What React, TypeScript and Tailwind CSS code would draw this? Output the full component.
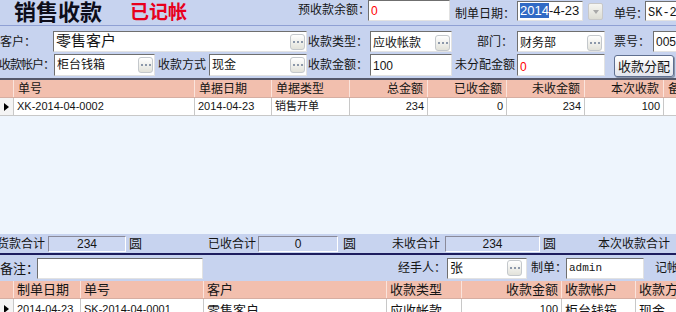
import React from 'react';

const Dots: React.FC = () => (
  <span className="flex h-[16px] w-[15px] shrink-0 items-center justify-center gap-[2px] rounded-[3px] border border-[#c4c8cc] bg-linear-to-b from-white to-[#e2e2da]">
    <i className="h-[2px] w-[2px] bg-[#8c98aa]" />
    <i className="h-[2px] w-[2px] bg-[#8c98aa]" />
    <i className="h-[2px] w-[2px] bg-[#8c98aa]" />
  </span>
);

type BoxProps = { className: string; dots?: boolean; children?: React.ReactNode };

const Box: React.FC<BoxProps> = ({ className, dots, children }) => (
  <div
    className={`flex shrink-0 items-center border border-t-[#6f6f6f] border-l-[#6f6f6f] border-r-[#e2e2e2] border-b-[#e2e2e2] bg-white pl-[2px] pr-[1px] ${className}`}
  >
    <div className="flex-1 overflow-hidden whitespace-nowrap">{children}</div>
    {dots && <Dots />}
  </div>
);

const Label: React.FC<{ className: string; children: React.ReactNode }> = ({ className, children }) => (
  <div className={`flex shrink-0 items-center whitespace-nowrap leading-none ${className}`}>{children}</div>
);

const Arrow: React.FC = () => (
  <span className="h-0 w-0 border-y-[4px] border-l-[5px] border-y-transparent border-l-black" />
);

const topCols = [
  { w: 'w-[181px]', t: '单号', v: 'XK-2014-04-0002', r: false },
  { w: 'w-[77px]', t: '单据日期', v: '2014-04-23', r: false },
  { w: 'w-[78px]', t: '单据类型', v: '销售开单', r: false },
  { w: 'w-[78px]', t: '总金额', v: '234', r: true },
  { w: 'w-[79px]', t: '已收金额', v: '0', r: true },
  { w: 'w-[78px]', t: '未收金额', v: '234', r: true },
  { w: 'w-[79px]', t: '本次收款', v: '100', r: true },
  { w: 'w-[40px]', t: '备', v: '', r: false },
];

const bottomCols = [
  { w: 'w-[67px]', t: '制单日期', v: '2014-04-23', r: false },
  { w: 'w-[123px]', t: '单号', v: 'SK-2014-04-0001', r: false },
  { w: 'w-[183px]', t: '客户', v: '零售客户', r: false },
  { w: 'w-[75px]', t: '收款类型', v: '应收帐款', r: false },
  { w: 'w-[100px]', t: '收款金额', v: '100', r: true },
  { w: 'w-[74px]', t: '收款帐户', v: '柜台钱箱', r: false },
  { w: 'w-[60px]', t: '收款方', v: '现金', r: false },
];

const Sum: React.FC<{ className: string; children: React.ReactNode }> = ({ className, children }) => (
  <div
    className={`flex h-[16px] shrink-0 items-center justify-center border border-t-[#8a8a9a] border-l-[#8a8a9a] border-r-white border-b-white bg-[#cdd8f2] text-[12px] ${className}`}
  >
    {children}
  </div>
);

export default function App() {
  return (
    <div className="flex h-[312px] w-[676px] flex-col overflow-hidden bg-[#c7d3ef] font-['Liberation_Sans','Noto_Sans_CJK_SC',sans-serif] text-[12px] text-[#151515]">
      {/* title row */}
      <div className="flex h-[26px] shrink-0 items-start border-b border-[#8fa0d4]">
        <div className="ml-[14px] mt-[1px] w-[116px] shrink-0 text-[22px] font-bold leading-[24px] text-[#0d0d1a]">销售收款</div>
        <div className="mt-[3px] w-[168px] shrink-0 text-[19px] font-bold leading-[20px] text-[#e8001c]">已记帐</div>
        <Label className="mt-[4px] w-[70px]">预收款余额：</Label>
        <Box className="h-[21px] w-[82px] items-start pt-[1px] text-[#ff0000]">0</Box>
        <Label className="ml-[5px] mt-[8px] w-[62px]">制单日期：</Label>
        <Box className="mt-[1px] h-[20px] w-[66px] text-[13px]">
          <span className="bg-[#316ac5] text-white">2014</span>-4-23
        </Box>
        <div className="ml-[5px] mt-[3px] flex h-[17px] w-[15px] shrink-0 items-center justify-center rounded-[2px] border border-[#c8c8c8] bg-linear-to-b from-[#f6f6f2] to-[#dcdcd4]">
          <span className="h-0 w-0 border-x-[3px] border-t-[4px] border-x-transparent border-t-[#a8a8a8]" />
        </div>
        <Label className="ml-[11px] mt-[8px] w-[31px] tracking-[-1px]">单号：</Label>
        <Box className="mt-[1px] h-[20px] flex-1 items-start pt-[2px] font-['Liberation_Mono',monospace] text-[12px]">SK-2014-04-0001</Box>
      </div>

      {/* row 1 */}
      <div className="mt-[5px] flex h-[21px] shrink-0 items-stretch">
        <Label className="w-[53px]">客户：</Label>
        <Box className="w-[254px] text-[15px]" dots>零售客户</Box>
        <Label className="w-[63px] justify-end pr-[2px]">收款类型：</Label>
        <Box className="w-[82px] pt-[2px]" dots>应收帐款</Box>
        <Label className="w-[65px] justify-end pr-[4px]">部门：</Label>
        <Box className="w-[88px] pr-[2px] pt-[2px]" dots>财务部</Box>
        <Label className="w-[48px] pl-[9px]">票号：</Label>
        <Box className="flex-1 items-start pt-[1px]">005</Box>
      </div>

      {/* row 2 */}
      <div className="mt-[2px] flex h-[22px] shrink-0 items-stretch">
        <Label className="w-[54px] justify-end tracking-[-1px]">收款帐户：</Label>
        <Box className="w-[101px]" dots>柜台钱箱</Box>
        <Label className="w-[54px] pl-[3px]">收款方式</Label>
        <Box className="w-[98px]" dots>现金</Box>
        <Label className="w-[63px] justify-end pr-[2px]">收款金额：</Label>
        <Box className="w-[82px] items-start pt-[2px]">100</Box>
        <Label className="w-[65px] pl-[3px]">未分配金额</Label>
        <Box className="w-[88px] items-start pt-[3px] text-[#ff0000]">0</Box>
        <button className="ml-[9px] mt-[1px] h-[22px] w-[60px] shrink-0 rounded-[3px] border border-[#5f6f90] bg-linear-to-b from-white to-[#e2e4ec] text-[13px] leading-none text-[#151515] shadow-[1px_1px_0_#8a94a8]">
          收款分配
        </button>
      </div>

      <div className="mt-[2px] h-[2px] shrink-0 bg-[#55586a]" />

      {/* top grid */}
      <div className="flex h-[18px] shrink-0 border-b border-[#d6aea2] bg-[#f2bfae]">
        <div className="w-[14px] shrink-0 border-r border-[#fbe4dc]" />
        {topCols.map((c) => (
          <div
            key={c.t}
            className={`flex shrink-0 items-center whitespace-nowrap border-r border-[#fbe4dc] px-[4px] leading-none ${c.w} ${c.r ? 'justify-end' : ''}`}
          >
            {c.t}
          </div>
        ))}
      </div>
      <div className="flex h-[18px] shrink-0 border-b border-[#c8c8c8] bg-white text-[11px]">
        <div className="flex w-[14px] shrink-0 items-center justify-center border-r border-[#c8c8c8] bg-[#f4f4f4]">
          <Arrow />
        </div>
        {topCols.map((c) => (
          <div
            key={c.t}
            className={`flex shrink-0 items-center whitespace-nowrap border-r border-[#c8c8c8] px-[3px] leading-none ${c.w} ${c.r ? 'justify-end' : ''}`}
          >
            {c.v}
          </div>
        ))}
      </div>
      <div className="h-[118px] shrink-0 bg-[#eef5fd]" />

      {/* totals */}
      <div className="flex h-[19px] shrink-0 items-center">
        <Label className="w-[48px] justify-end pr-[3px]">货款合计</Label>
        <Sum className="w-[78px]">234</Sum>
        <Label className="w-[82px] pl-[3px] text-[13px]">圆</Label>
        <Label className="w-[50px]">已收合计</Label>
        <Sum className="w-[80px]">0</Sum>
        <Label className="w-[54px] pl-[5px] text-[13px]">圆</Label>
        <Label className="w-[53px]">未收合计</Label>
        <Sum className="w-[95px]">234</Sum>
        <Label className="w-[58px] pl-[3px] text-[13px]">圆</Label>
        <Label className="flex-1">本次收款合计</Label>
      </div>
      <div className="h-[2px] shrink-0 bg-[#1d1d5e]" />

      {/* remarks */}
      <div className="flex h-[26px] shrink-0 items-center">
        <Label className="w-[37px] text-[13px]">备注：</Label>
        <Box className="h-[21px] w-[166px]" />
        <Label className="ml-[195px] w-[49px]">经手人：</Label>
        <Box className="h-[21px] w-[80px] pr-[4px] text-[13px]" dots>张</Box>
        <Label className="ml-[4px] w-[35px]">制单：</Label>
        <Box className="h-[21px] w-[78px] font-['Liberation_Mono',monospace] text-[11px]">admin</Box>
        <Label className="ml-[11px] flex-1">记帐</Label>
      </div>

      {/* bottom grid */}
      <div className="flex h-[18px] shrink-0 border-b border-[#d6aea2] bg-[#f2bfae] text-[13px]">
        <div className="w-[14px] shrink-0 border-r border-[#fbe4dc]" />
        {bottomCols.map((c) => (
          <div
            key={c.t}
            className={`flex shrink-0 items-center whitespace-nowrap border-r border-[#fbe4dc] px-[3px] leading-none ${c.w} ${c.r ? 'justify-end' : ''}`}
          >
            {c.t}
          </div>
        ))}
      </div>
      <div className="flex h-[20px] shrink-0 border-b border-[#c8c8c8] bg-white text-[11px]">
        <div className="flex w-[14px] shrink-0 items-start justify-center border-r border-[#c8c8c8] bg-[#f4f4f4] pt-[6px]">
          <Arrow />
        </div>
        {bottomCols.map((c) => (
          <div
            key={c.t}
            className={`flex shrink-0 items-start overflow-hidden whitespace-nowrap border-r border-[#c8c8c8] px-[3px] pt-[5px] leading-none ${c.w} ${c.r ? 'justify-end' : ''} ${/[\u4e00-\u9fff]/.test(c.v) ? 'text-[13px]' : ''}`}
          >
            {c.v}
          </div>
        ))}
      </div>
    </div>
  );
}
